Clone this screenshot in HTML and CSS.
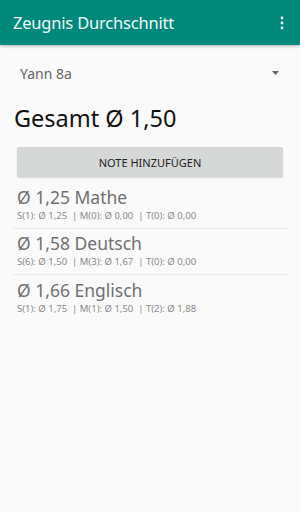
FILE: index.html
```html
<!DOCTYPE html>
<html>
<head>
<meta charset="utf-8">
<link rel="stylesheet" href="styles.css">
</head>
<body>
<header class="appbar">
  <span class="apptitle">Zeugnis Durchschnitt</span>
  <svg class="kebab" width="4" height="14" viewBox="0 0 4 14"><circle cx="2" cy="2" r="1.4" fill="#fff"/><circle cx="2" cy="7" r="1.4" fill="#fff"/><circle cx="2" cy="12" r="1.4" fill="#fff"/></svg>
</header>
<main class="content">
  <div class="spinner">
    <span class="spinner-text">Yann 8a</span>
    <svg class="arrow" width="7" height="4" viewBox="0 0 7 4"><path d="M0 0 L7 0 L3.5 4 Z" fill="#666"/></svg>
  </div>
  <h1 class="total">Gesamt Ø 1,50</h1>
  <button class="addbtn">NOTE HINZUFÜGEN</button>
  <ul class="list">
    <li class="item">
      <div class="item-title">Ø 1,25 Mathe</div>
      <div class="item-sub">S(1): Ø 1,25 &nbsp;| M(0): Ø 0,00 &nbsp;| T(0): Ø 0,00</div>
    </li>
    <li class="item">
      <div class="item-title">Ø 1,58 Deutsch</div>
      <div class="item-sub">S(6): Ø 1,50 &nbsp;| M(3): Ø 1,67 &nbsp;| T(0): Ø 0,00</div>
    </li>
    <li class="item">
      <div class="item-title">Ø 1,66 Englisch</div>
      <div class="item-sub">S(1): Ø 1,75 &nbsp;| M(1): Ø 1,50 &nbsp;| T(2): Ø 1,88</div>
    </li>
  </ul>
</main>
</body>
</html>
```
FILE: styles.css
```css
* { box-sizing: border-box; }
html, body { margin: 0; padding: 0; }
body {
  width: 300px;
  height: 512px;
  background: #fafafa;
  font-family: "Noto Sans", "Open Sans", sans-serif;
  overflow: hidden;
}
.appbar {
  height: 45px;
  background: #00897b;
  display: flex;
  align-items: center;
  justify-content: space-between;
  padding: 0 16px 0 13px;
  box-shadow: 0 1px 3px rgba(0,0,0,0.3);
  position: relative;
}
.apptitle {
  color: #f4fbfa;
  font-size: 16.5px;
  font-weight: normal;
  letter-spacing: -0.2px;
  padding-bottom: 1px;
}
.kebab { display: block; margin-top: 1px; }
.content { padding: 0 12px 0 13px; }
.spinner {
  display: flex;
  align-items: center;
  justify-content: space-between;
  height: 32px;
  margin-top: 12px;
  padding: 0 9px 0 7px;
}
.spinner-text {
  color: #666;
  font-size: 14px;
}
.arrow { display: block; }
.total {
  margin: 14px 0 0 1px;
  font-weight: normal;
  font-size: 23.5px;
  line-height: 30px;
  color: #111;
}
.addbtn {
  display: block;
  width: 266px;
  height: 30px;
  margin: 14px 0 0 4px;
  border: none;
  border-radius: 2px;
  background: #d6d7d7;
  box-shadow: 0 1px 1.5px rgba(0,0,0,0.15);
  font-family: "Noto Sans", "Open Sans", sans-serif;
  font-size: 11px;
  color: #222;
  padding: 0;
}
.list { list-style: none; margin: 5px 0 0 0; padding: 0; }
.item {
  padding: 4.5px 0 6px 4px;
  border-bottom: 1px solid #ebebeb;
}
.item:last-child { border-bottom: none; }
.item-title {
  font-size: 17.5px;
  line-height: 20px;
  color: #707070;
}
.item-sub {
  margin-top: 3px;
  font-size: 9.5px;
  line-height: 12px;
  color: #8a8a8a;
}
```
